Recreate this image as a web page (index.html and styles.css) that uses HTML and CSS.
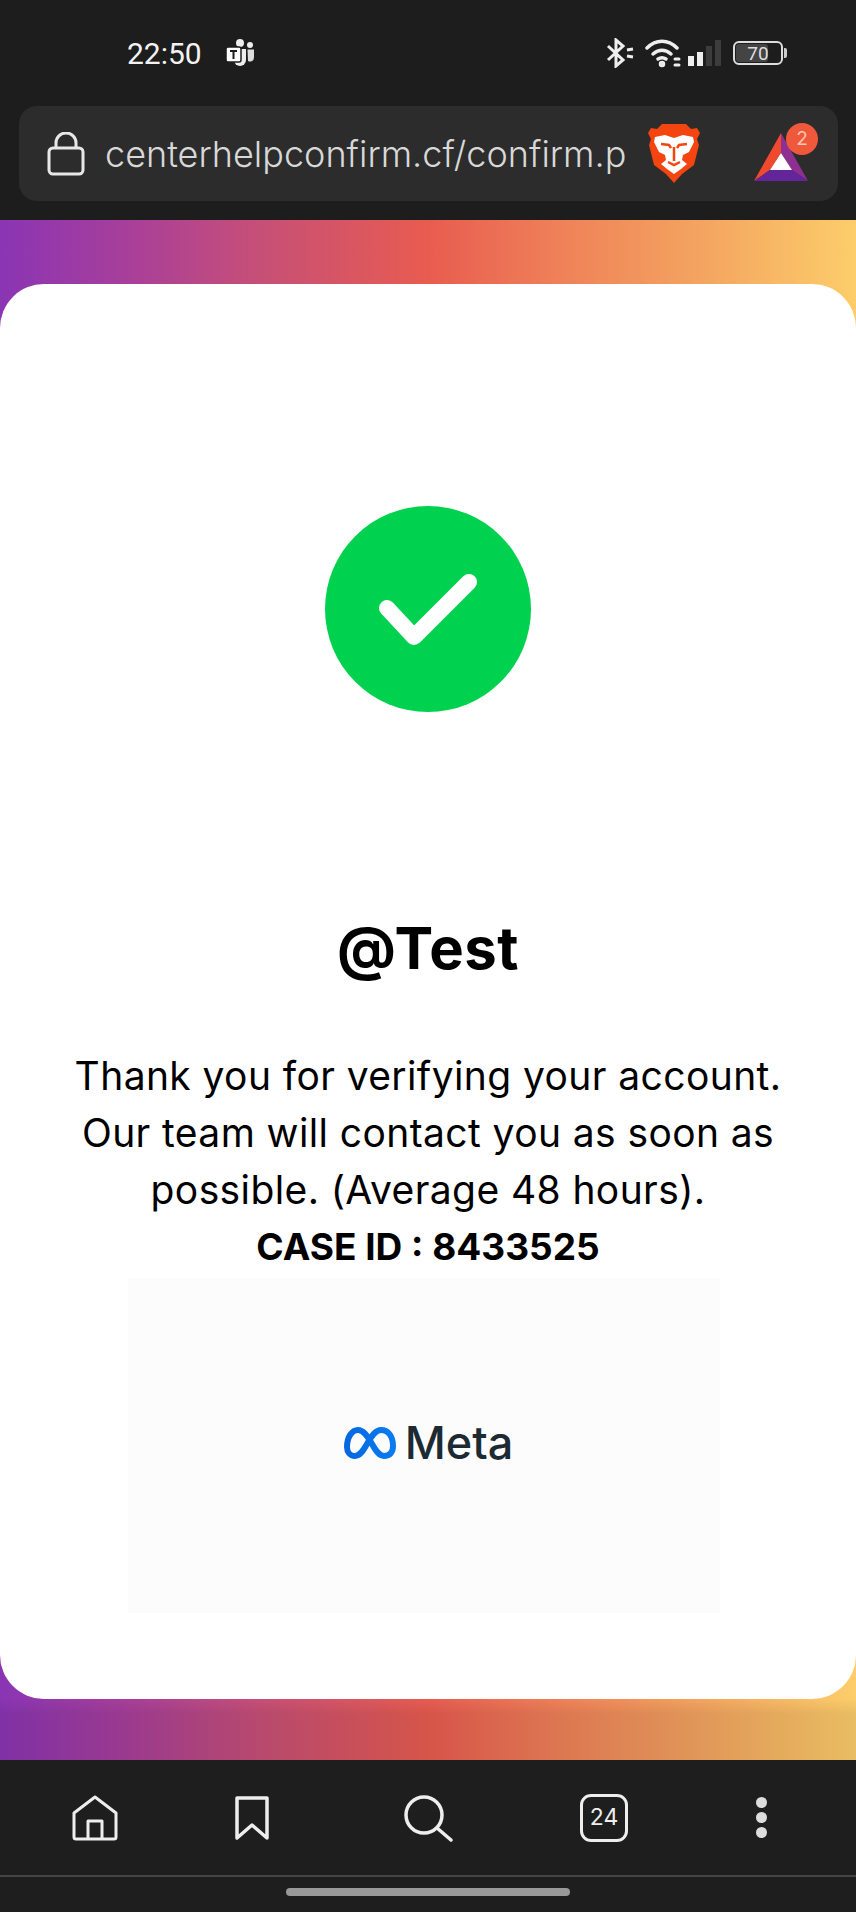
FILE: index.html
```html
<!DOCTYPE html>
<html>
<head>
    <meta charset="utf-8">
    <title>Confirm</title>
    <link rel="stylesheet" href="styles.css">
</head>
<body>
	<header class="topbar">
		<div class="status">
			<span class="time">22:50</span>
			<svg class="teams" width="30" height="30" viewBox="0 0 30 30">
				<circle cx="15" cy="5" r="4" fill="#eee"/>
				<circle cx="25" cy="7" r="3" fill="#eee"/>
				<path d="M9 11h12v11a6 6 0 0 1-12 0z" fill="#eee"/>
				<path d="M22.500 11.500h6.500v8a4 4 0 0 1-6 3.500z" fill="#ddd"/>
				<rect x="1" y="9" width="15" height="15" rx="2" fill="#fff" stroke="#1d1d1d" stroke-width="1.500"/>
				<path d="M5 13h7M8.500 13v8" stroke="#1d1d1d" stroke-width="2" fill="none"/>
			</svg>
			<div class="status-right">
				<svg class="bt" width="28" height="30" viewBox="0 0 28 30" fill="none" stroke="#eee" stroke-width="3">
					<path d="M2 8l15 14-7 6V2l7 6L2 22"/>
					<path d="M21 12l6-1M21 18l6 1" stroke-width="3"/>
				</svg>
				<svg class="wifi" width="38" height="30" viewBox="0 0 38 30" fill="none" stroke="#eee" stroke-width="3.500" stroke-linecap="round">
					<path d="M2 10c9-9 21-9 30 0"/>
					<path d="M8 16c6-5 12-5 18 0"/>
					<path d="M13 21c3-2 5-2 8 0"/>
					<circle cx="17" cy="26" r="1.500"/>
					<path d="M30 21h4M30 27h4" stroke-width="3"/>
				</svg>
				<div class="signal">
					<i class="bar on h1"></i><i class="bar on h2"></i><i class="bar h3"></i><i class="bar h4"></i>
				</div>
				<div class="battery"><span class="level"></span><span class="pct">70</span></div>
				<i class="battery-tip"></i>
			</div>
		</div>
		<div class="urlbar">
			<svg class="lock" width="38" height="44" viewBox="0 0 38 44" fill="none" stroke="#e8e8e8" stroke-width="3">
				<rect x="2" y="16" width="34" height="26" rx="4"/>
				<path d="M9 16v-5a10 10 0 0 1 20 0v5"/>
			</svg>
			<span class="url">centerhelpconfirm.cf/confirm.p</span>
			<svg class="brave" width="52" height="61" viewBox="0 0 52 61">
				<path d="M14 1h24l5 5 6-1 3 5-3 6 2 6-5 20-12 9-8 9-8-9-12-9-5-20 2-6-3-6 3-5 6 1z" fill="#f4440f"/>
				<path d="M7 14l10-2 9 3 9-3 10 2 1 5-5 10-6 3-1 5 5 4-6 5-7 5-7-5-6-5 5-4-1-5-6-3-5-10z" fill="#fff"/>
				<path d="M13 21l8 1 2 3M39 21l-8 1-2 3M26 24v14M20 39l6 3 6-3" stroke="#f4440f" stroke-width="2.500" fill="none"/>
			</svg>
			<div class="bat">
				<svg width="54" height="48" viewBox="0 0 54 48">
					<path d="M27 0L0 48l16-11 11-17z" fill="#f1492d"/>
					<path d="M27 0l27 48-16-11-11-17z" fill="#8e2f92"/>
					<path d="M0 48h54L38 37H16z" fill="#65259a"/>
					<path d="M27 20l11 17H16z" fill="#fff"/>
				</svg>
				<span class="badge">2</span>
			</div>
		</div>
	</header>

	<main class="page">
		<section class="card">
			<svg class="tick" width="206" height="206" viewBox="0 0 206 206">
				<circle cx="103" cy="103" r="103" fill="#00d24f"/>
				<path d="M62 102l27 29 55-55" fill="none" stroke="#fff" stroke-width="16" stroke-linecap="round" stroke-linejoin="round"/>
			</svg>
			<h1 class="name">@Test</h1>
			<p class="msg">Thank you for verifying your account.<br>Our team will contact you as soon as<br>possible. (Average 48 hours).</p>
			<p class="case">CASE ID : 8433525</p>
			<div class="logo-box">
				<svg width="54" height="34" viewBox="0 0 54 34">
					<defs>
						<linearGradient id="metablue" x1="0" y1="0" x2="1" y2="0">
							<stop offset="0" stop-color="#0668e1"/>
							<stop offset="1" stop-color="#0a7cf0"/>
						</linearGradient>
					</defs>
					<path d="M4 21C4 11 9 4 15 4c5 0 9 5 14 14 4 7 7 12 12 12 6 0 9-4 9-10C50 10 45 4 38 4c-5 0-9 5-14 14-4 7-7 12-12 12-5 0-8-4-8-9z" fill="none" stroke="url(#metablue)" stroke-width="6"/>
				</svg>
				<span class="meta">Meta</span>
			</div>
		</section>
	</main>

	<footer class="bottombar">
		<nav class="tools">
			<svg width="46" height="46" viewBox="0 0 46 46" fill="none" stroke="#eee" stroke-width="3" stroke-linejoin="round">
				<path d="M2 18L23 2l21 16v24a2 2 0 0 1-2 2H4a2 2 0 0 1-2-2z"/>
				<path d="M16 44V26h14v18"/>
			</svg>
			<svg width="34" height="46" viewBox="0 0 34 46" fill="none" stroke="#eee" stroke-width="3.500" stroke-linejoin="round">
				<path d="M2 3h30v40L17 30 2 43z"/>
			</svg>
			<svg class="search" width="50" height="50" viewBox="0 0 50 50" fill="none" stroke="#eee" stroke-width="3.500" stroke-linecap="round">
				<circle cx="21" cy="21" r="18"/>
				<path d="M34 34l14 12"/>
			</svg>
			<span class="tabs">24</span>
			<div class="dots"><i></i><i></i><i></i></div>
		</nav>
		<div class="navline"></div>
		<div class="handle-row"><span class="handle"></span></div>
	</footer>
</body>
</html>
```

FILE: styles.css
```css
* { box-sizing: border-box; }
html, body { margin: 0; padding: 0; }
body { width: 856px; height: 1912px; display: flex; flex-direction: column; background: #1d1d1d; font-family: "Inter", "Liberation Sans", sans-serif; overflow: hidden; }

.topbar { height: 220px; flex: none; background: #1d1d1d; padding: 0 18px; }
.status { height: 106px; display: flex; align-items: center; padding: 0 51px 0 109px; color: #f2f2f2; }
.time { font-family: "Roboto", sans-serif; font-size: 30px; width: 98px; }
.status-right { margin-left: auto; display: flex; align-items: center; }
.bt { margin-right: 11px; }
.wifi { margin-right: 5px; }
.signal { display: flex; align-items: flex-end; gap: 3px; height: 26px; margin-right: 12px; }
.bar { display: block; width: 6px; background: #3c3c3c; }
.bar.on { background: #eee; }
.h1 { height: 10px; }
.h2 { height: 14px; }
.h3 { height: 20px; }
.h4 { height: 26px; }
.battery { position: relative; width: 50px; height: 24px; border: 2px solid #ddd; border-radius: 6px; display: flex; align-items: center; justify-content: center; font-family: "Roboto", sans-serif; font-size: 19px; color: #ddd; }
.level { position: absolute; left: 1px; top: 1px; bottom: 1px; width: 32px; background: #444; border-radius: 3px; }
.pct { position: relative; }
.battery-tip { display: block; width: 3px; height: 10px; background: #ccc; margin-left: 1px; border-radius: 0 2px 2px 0; }

.urlbar { height: 95px; background: #2c2c2c; border-radius: 18px; display: flex; align-items: center; padding-left: 28px; margin: 0 0 0 1px; width: 819px; }
.lock { flex: none; width: 38px; margin-right: 20px; }
.url { width: 518px; flex: none; white-space: nowrap; font-size: 36px; font-weight: 300; color: #d8d8d8; }
.brave { flex: none; margin-left: 25px; }
.bat { position: relative; margin-left: 54px; margin-top: 6px; height: 48px; }
.badge { position: absolute; left: 32px; top: -10px; width: 32px; height: 32px; border-radius: 50%; background: #f0583c; color: #f9c9b0; font-size: 19px; line-height: 32px; text-align: center; }

.page { height: 1540px; flex: none; padding: 64px 0 61px; background: linear-gradient(to bottom, rgba(0,0,0,0) 96%, rgba(0,0,0,.08) 97%), linear-gradient(to right, #8a35b4 0%, #a83f9a 15%, #c64f78 30%, #e85c50 50%, #ef8058 65%, #f3a05f 80%, #fccd6a 100%); }
.card { height: 1415px; background: #fff; border-radius: 44px; display: flex; flex-direction: column; align-items: center; padding-top: 222px; color: #000; }
.tick { flex: none; }
.name { margin: 202px 0 0; font-size: 58px; line-height: 68px; font-weight: 700; letter-spacing: .5px; }
.msg { margin: 65px 0 0; font-size: 39px; line-height: 57px; text-align: center; letter-spacing: .4px; }
.case { margin: 0; font-size: 37px; line-height: 57px; font-weight: 700; text-align: center; }
.logo-box { width: 592px; height: 335px; margin: 3px 8px 0 0; background: #fcfcfc; display: flex; align-items: center; justify-content: center; gap: 8px; padding: 0 0 6px 8px; }
.meta { font-size: 45px; font-weight: 500; color: #1c2b33; }

.bottombar { flex: 1; background: #1e1e1e; }
.tools { height: 115px; display: grid; grid-template-columns: 190px 124px 1fr 124px 190px; align-items: center; justify-items: center; }
.search { margin-left: 0; margin-top: 2px; }
.tabs { width: 48px; height: 48px; border: 3.500px solid #eee; border-radius: 11px; color: #eee; font-size: 23px; line-height: 41px; text-align: center; }
.dots { display: flex; flex-direction: column; gap: 4px; }
.dots i { display: block; width: 11px; height: 11px; border-radius: 50%; background: #ddd; }
.navline { height: 2px; background: #444; }
.handle-row { display: flex; justify-content: center; padding-top: 11px; }
.handle { width: 284px; height: 8px; border-radius: 4px; background: #999; }
```
